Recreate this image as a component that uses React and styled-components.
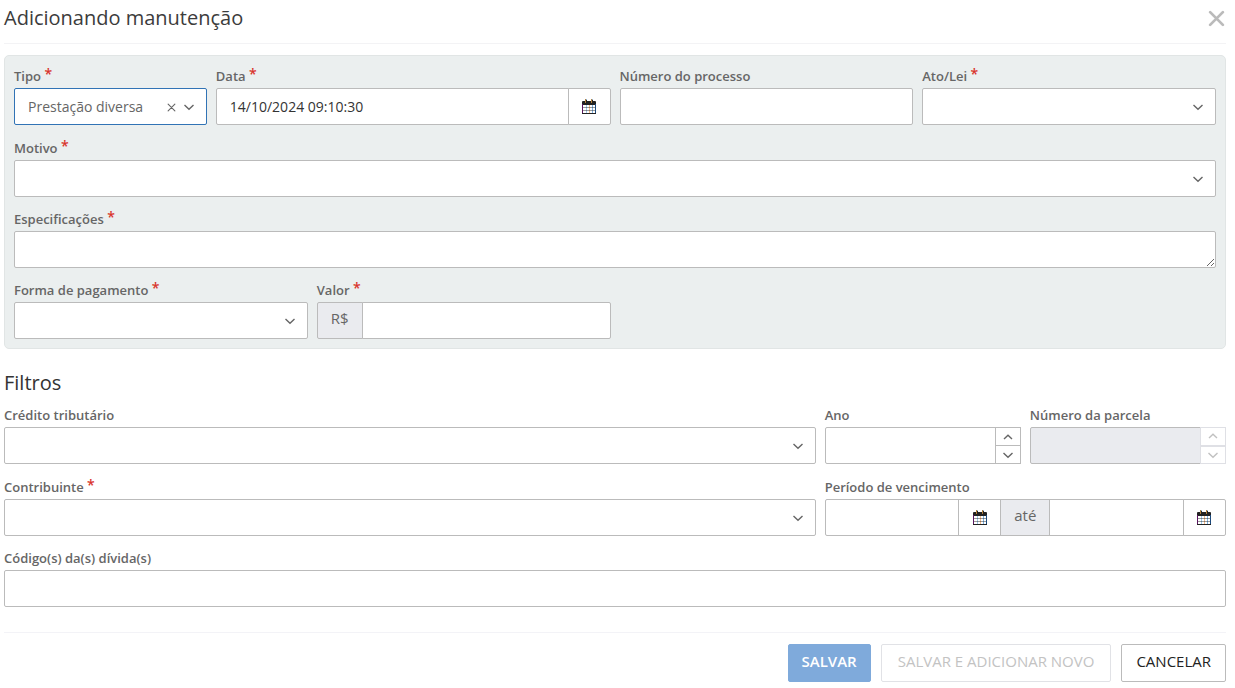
import { useState } from "react"
import styled, { createGlobalStyle, css } from "styled-components"

const GlobalStyle = createGlobalStyle`
    * {
        box-sizing: border-box;
    }

    body {
        margin: 0;
        background: #ffffff;
        font-family: "Open Sans", "Noto Sans", sans-serif;
        font-size: 14px;
        color: #222222;
    }

    button, input, select, textarea {
        margin: 0;
        font-family: inherit;
    }
`

const StyledForm = styled.form`
    display: block;
    padding: 0 9px 6px 4px;
`

const Header = styled.header`
    display: flex;
    justify-content: space-between;
    align-items: flex-start;
    height: 44px;
    padding-top: 4px;
    margin-bottom: 11px;
    border-bottom: 1px solid #f3f3f5;
`

const Title = styled.h1`
    margin: 0;
    line-height: 28px;
    font-size: 20px;
    font-weight: 400;
    color: #3c3c3c;
`

const Subtitle = styled.h2`
    margin: 20px 0 8px;
    line-height: 28px;
    font-size: 20px;
    font-weight: 400;
    color: #333333;
`

const CloseButton = styled.button`
    display: flex;
    align-items: center;
    justify-content: center;
    width: 20px;
    height: 28px;
    padding: 0;
    border: 0;
    background: none;
    color: #bbbbbb;
    cursor: pointer;
`

const Panel = styled.section`
    padding: 10px 9px 9px;
    border: 1px solid #e1e5e5;
    border-radius: 5px;
    background: #ebefef;
`

const Grid = styled.div`
    display: grid;
    grid-template-columns: repeat(12, minmax(0, 1fr));
    grid-template-rows: 60px;
    gap: 12px 9px;
`

const StyledField = styled.div`
    grid-column: span ${props => props.$span};

    label {
        display: block;
        height: 20px;
        margin-bottom: 2px;
        line-height: 20px;
        font-size: 13px;
        font-weight: 600;
        color: #666666;
        white-space: nowrap;
    }

    .required {
        display: inline-block;
        color: #d9342b;
        font-size: 14px;
        line-height: 15px;
        vertical-align: top;
    }
`

const control = css`
    display: block;
    width: 100%;
    min-width: 0;
    height: 37px;
    padding: 0 13px;
    border: 1px solid #bbbbbb;
    border-radius: 2px;
    background: #ffffff;
    font-size: 14px;
    color: #333333;
    outline: none;

    &:disabled {
        background: #eaebef;
    }
`

const Input = styled.input`
    ${control}
`

const TextArea = styled.textarea`
    ${control}
    min-height: 37px;
    padding: 8px 13px;
    resize: vertical;
`

const SelectBox = styled.div`
    position: relative;

    select {
        ${control}
        padding-right: 48px;
        appearance: none;
        color: #666666;
        border-color: ${props => props.$active ? "#3173b5" : "#bbbbbb"};
    }

    .arrow {
        position: absolute;
        top: 13px;
        right: 12px;
        pointer-events: none;
    }

    .clear {
        position: absolute;
        top: 11px;
        right: 27px;
        display: flex;
        align-items: center;
        justify-content: center;
        width: 16px;
        height: 16px;
        padding: 0;
        border: 0;
        background: none;
        color: #666666;
        cursor: pointer;
    }
`

const Group = styled.div`
    display: flex;

    > * + * {
        margin-left: -1px;
    }

    > *:not(:first-child) {
        border-top-left-radius: 0;
        border-bottom-left-radius: 0;
    }

    > *:not(:last-child) {
        border-top-right-radius: 0;
        border-bottom-right-radius: 0;
    }
`

const Addon = styled.span`
    flex: none;
    height: 37px;
    padding: 0 13px;
    border: 1px solid #bbbbbb;
    border-radius: 2px;
    background: #eaebef;
    line-height: 30px;
    font-size: 15px;
    color: #666666;
`

const IconButton = styled.button`
    display: flex;
    flex: none;
    align-items: center;
    justify-content: center;
    width: 43px;
    height: 37px;
    padding: 0;
    border: 1px solid #bbbbbb;
    border-radius: 2px;
    background: #ffffff;
    cursor: pointer;
`

const Stepper = styled.div`
    display: flex;
    flex: none;
    flex-direction: column;
    width: 26px;
    height: 37px;

    button {
        display: flex;
        flex: 1;
        align-items: center;
        justify-content: center;
        padding: 0;
        border: 1px solid #bbbbbb;
        background: #ffffff;
        cursor: pointer;
    }

    button + button {
        margin-top: -1px;
    }

    button:disabled {
        border-color: #dfe0e5;
        cursor: default;

        svg {
            opacity: 0.4;
        }
    }

    button + button:disabled {
        margin-top: 0;
    }
`

const Footer = styled.footer`
    display: flex;
    justify-content: flex-end;
    gap: 10px;
    margin-top: 25px;
    padding-top: 11px;
    border-top: 1px solid #f3f3f7;
`

const variants = {
    primary: css`
        border-color: #7faadb;
        background: #7faadb;
        color: #ffffff;
        font-weight: 600;
        padding: 0 13px 4px;
    `,
    muted: css`
        border-color: #e1e2e6;
        color: #c3c3c3;
        padding: 0 16px 4px;
    `,
    normal: css`
        border-color: #bbbbbb;
        color: #222222;
        padding: 0 14px 4px;
    `
}

const Button = styled.button`
    height: 38px;
    border: 1px solid;
    border-radius: 2px;
    background: #ffffff;
    font-size: 15px;
    text-transform: uppercase;
    white-space: nowrap;
    ${props => variants[props.$variant || "normal"]}
`

const Chevron = ({ up, className }) => (
    <svg className={className} width="12" height="12" viewBox="0 0 12 12" fill="none" stroke="#666666" strokeWidth="1.4" aria-hidden="true">
        <path d={up ? "M2 8 L6 4.2 L10 8" : "M1.5 4 L6 8.3 L10.5 4"}/>
    </svg>
)

const Cross = ({ size, stroke }) => (
    <svg width={size} height={size} viewBox="0 0 16 16" fill="none" stroke="currentColor" strokeWidth={stroke} strokeLinecap="round" aria-hidden="true">
        <path d="M2 2 L14 14 M14 2 L2 14"/>
    </svg>
)

const CalendarIcon = () => (
    <svg width="14" height="15" viewBox="0 0 14 15" fill="none" aria-hidden="true">
        <path d="M4.5 5 V14" stroke="#9fc9e8"/>
        <path d="M7.5 5 V14" stroke="#f0b98a"/>
        <path d="M10.5 5 V14" stroke="#7fb2e0"/>
        <path d="M1 8.5 H13 M1 11.5 H13" stroke="#222222" strokeOpacity="0.45"/>
        <path d="M0 3 Q0 2 1 2 H13 Q14 2 14 3 V6 H0 Z" fill="#222222"/>
        <path d="M0.5 5 V14.5" stroke="#5a1560"/>
        <path d="M13.5 5 V14.5" stroke="#1c4a7c"/>
        <path d="M0 14.5 H14" stroke="#222222"/>
        <path d="M3.5 0 V4 M9.5 0 V4" stroke="#b5803a"/>
        <path d="M4.5 1 V3 M10.5 1 V3" stroke="#222222"/>
        <path d="M4 0.5 H5 M10 0.5 H11" stroke="#8fb4d8"/>
    </svg>
)

const Field = ({ id, label, span, required, children }) => (
    <StyledField $span={span}>
        <label htmlFor={id}>
            {label} {required ? <span className="required">*</span> : ""}
        </label>
        {children}
    </StyledField>
)

const Select = ({ id }) => (
    <SelectBox>
        <select id={id} defaultValue="">
            <option value=""></option>
        </select>
        <Chevron className="arrow"/>
    </SelectBox>
)

const NumberInput = ({ id, disabled }) => (
    <Group>
        <Input id={id} type="text" inputMode="numeric" disabled={disabled}/>
        <Stepper>
            <button type="button" aria-label="Aumentar" disabled={disabled}><Chevron up/></button>
            <button type="button" aria-label="Diminuir" disabled={disabled}><Chevron/></button>
        </Stepper>
    </Group>
)

const App = () => {

    const [ tipo, setTipo ] = useState("diversa")

    return (
        <StyledForm onSubmit={e => e.preventDefault()}>
            <GlobalStyle/>
            <Header>
                <Title>Adicionando manutenção</Title>
                <CloseButton type="button" aria-label="Fechar"><Cross size={17} stroke={2.6}/></CloseButton>
            </Header>
            <Panel>
                <Grid>
                    <Field id="tipo" label="Tipo" span={2} required>
                        <SelectBox $active>
                            <select id="tipo" value={tipo} onChange={e => setTipo(e.target.value)}>
                                <option value=""></option>
                                <option value="diversa">Prestação diversa</option>
                            </select>
                            {
                                tipo ?
                                <button type="button" className="clear" aria-label="Limpar" onClick={() => setTipo("")}>
                                    <Cross size={9} stroke={2}/>
                                </button> : ""
                            }
                            <Chevron className="arrow"/>
                        </SelectBox>
                    </Field>
                    <Field id="data" label="Data" span={4} required>
                        <Group>
                            <Input id="data" type="text" defaultValue="14/10/2024 09:10:30"/>
                            <IconButton type="button" aria-label="Abrir calendário"><CalendarIcon/></IconButton>
                        </Group>
                    </Field>
                    <Field id="processo" label="Número do processo" span={3}>
                        <Input id="processo" type="text"/>
                    </Field>
                    <Field id="ato" label="Ato/Lei" span={3} required>
                        <Select id="ato"/>
                    </Field>
                    <Field id="motivo" label="Motivo" span={12} required>
                        <Select id="motivo"/>
                    </Field>
                    <Field id="especificacoes" label="Especificações" span={12} required>
                        <TextArea id="especificacoes" rows={1}/>
                    </Field>
                    <Field id="forma" label="Forma de pagamento" span={3} required>
                        <Select id="forma"/>
                    </Field>
                    <Field id="valor" label="Valor" span={3} required>
                        <Group>
                            <Addon>R$</Addon>
                            <Input id="valor" type="text"/>
                        </Group>
                    </Field>
                </Grid>
            </Panel>
            <Subtitle>Filtros</Subtitle>
            <Grid>
                <Field id="credito" label="Crédito tributário" span={8}>
                    <Select id="credito"/>
                </Field>
                <Field id="ano" label="Ano" span={2}>
                    <NumberInput id="ano"/>
                </Field>
                <Field id="parcela" label="Número da parcela" span={2}>
                    <NumberInput id="parcela" disabled/>
                </Field>
                <Field id="contribuinte" label="Contribuinte" span={8} required>
                    <Select id="contribuinte"/>
                </Field>
                <Field id="vencimento" label="Período de vencimento" span={4}>
                    <Group>
                        <Input id="vencimento" type="text"/>
                        <IconButton type="button" aria-label="Abrir calendário inicial"><CalendarIcon/></IconButton>
                        <Addon>até</Addon>
                        <Input type="text" aria-label="Vencimento final"/>
                        <IconButton type="button" aria-label="Abrir calendário final"><CalendarIcon/></IconButton>
                    </Group>
                </Field>
                <Field id="codigos" label="Código(s) da(s) dívida(s)" span={12}>
                    <Input id="codigos" type="text"/>
                </Field>
            </Grid>
            <Footer>
                <Button type="submit" $variant="primary">Salvar</Button>
                <Button type="button" $variant="muted">Salvar e adicionar novo</Button>
                <Button type="button">Cancelar</Button>
            </Footer>
        </StyledForm>
    )

}

export default App
